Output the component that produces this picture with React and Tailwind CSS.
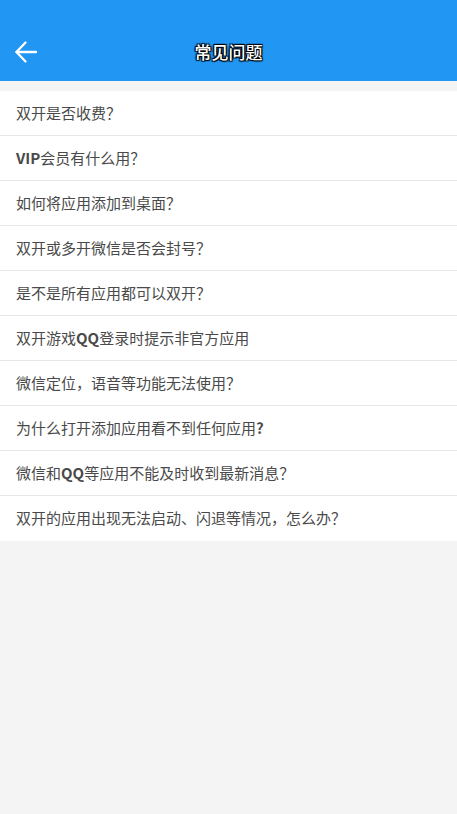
const questions = [
  '双开是否收费？',
  <><span className="font-semibold">VIP</span>会员有什么用？</>,
  '如何将应用添加到桌面？',
  '双开或多开微信是否会封号？',
  '是不是所有应用都可以双开？',
  <>双开游戏<span className="font-semibold">QQ</span>登录时提示非官方应用</>,
  '微信定位，语音等功能无法使用？',
  <>为什么打开添加应用看不到任何应用<span className="font-semibold">?</span></>,
  <>微信和<span className="font-semibold">QQ</span>等应用不能及时收到最新消息？</>,
  '双开的应用出现无法启动、闪退等情况，怎么办？',
];

export default function App() {
  return (
    <div className="min-h-[814px] bg-[#f4f4f4] font-['Noto_Sans_CJK_SC','Noto_Sans',sans-serif]">
      <header className="h-[81px] bg-[#2196f3] flex items-end pb-[17px] relative">
        <button className="w-[52px] pl-[14px] flex items-center text-white">
          <svg width="24" height="24" viewBox="0 0 24 24" fill="none" stroke="currentColor" strokeWidth="2.3" strokeLinecap="round" strokeLinejoin="round">
            <path d="M22 12H2.5" />
            <path d="M11.5 2.5L2.5 12l9 9.5" />
          </svg>
        </button>
        <h1 className="absolute left-0 right-0 bottom-[18px] text-center text-white text-[17px] font-medium leading-[22px] [text-shadow:0_0_1px_#000,1px_1px_1px_#000,-1px_-1px_1px_#000,1px_-1px_1px_#000,-1px_1px_1px_#000]">
          常见问题
        </h1>
      </header>
      <ul className="mt-[10px] bg-white">
        {questions.map((q, i) => (
          <li
            key={i}
            className={`h-[45px] flex items-center px-4 text-[15px] text-[#4a4a4a] ${
              i < questions.length - 1 ? 'border-b border-[#e6e6e6]' : ''
            }`}
          >
            {q}
          </li>
        ))}
      </ul>
    </div>
  );
}
